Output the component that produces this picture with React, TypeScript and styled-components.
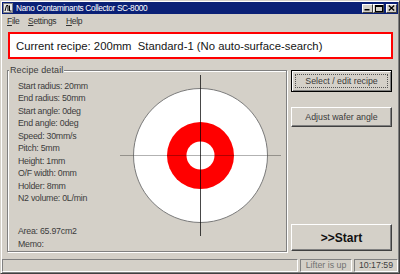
import React from "react";
import styled, { createGlobalStyle, css } from "styled-components";

const Global = createGlobalStyle`
  html, body { margin: 0; padding: 0; background: #d4d0c8; }
  body { width: 400px; height: 274px; overflow: hidden; font-family: "Liberation Sans", Arial, sans-serif; }
  * { box-sizing: border-box; }
`;

const Window = styled.div`
  width: 400px;
  height: 274px;
  background: #d4d0c8;
  border: 1px solid;
  border-color: #d4d0c8 #404040 #404040 #d4d0c8;
  box-shadow: inset 1px 1px 0 #ffffff, inset -1px -1px 0 #808080;
  padding: 1px;
  display: flex;
  flex-direction: column;
`;

const TitleBar = styled.div`
  height: 12px;
  flex: none;
  background: #0a2076;
  display: flex;
  align-items: center;
  padding: 0 1px 0 1px;
  color: #fff;
`;

const AppIcon = styled.svg`
  width: 10px;
  height: 10px;
  flex: none;
`;

const TitleText = styled.span`
  font-size: 8.3px;
  letter-spacing: -0.35px;
  line-height: 12px;
  margin-left: 3px;
  flex: 1;
  white-space: nowrap;
`;

const CaptionButtons = styled.div`
  display: flex;
  align-items: center;
`;

const CaptionButton = styled.div<{ $gap?: number }>`
  width: 11px;
  height: 9px;
  margin-left: ${(p) => p.$gap ?? 0}px;
  background: #d4d0c8;
  border-top: 1px solid #fff;
  border-left: 1px solid #fff;
  border-right: 1px solid #404040;
  border-bottom: 1px solid #404040;
  display: flex;
  align-items: center;
  justify-content: center;
`;

const MenuBar = styled.div`
  height: 14px;
  flex: none;
  display: flex;
  align-items: center;
  padding-left: 5px;
`;

const MenuItem = styled.span<{ $w: number }>`
  width: ${(p) => p.$w}px;
  font-size: 8.5px;
  letter-spacing: -0.3px;
  color: #303030;
  line-height: 14px;
`;

const Client = styled.div`
  display: flex;
  flex-direction: column;
  padding: 4px 0 0 5px;
`;

const RecipeBanner = styled.div`
  width: 385px;
  height: 27px;
  margin-left: 1px;
  border: 2px solid #ff0000;
  background: #fff;
  display: flex;
  align-items: center;
  padding-left: 6px;
  font-size: 11.3px;
  color: #151515;
  white-space: nowrap;
`;

const Body = styled.div`
  display: flex;
  margin-top: 11px;
  gap: 4px;
`;

const GroupFrame = styled.div`
  position: relative;
  width: 280px;
  height: 182px;
  border: 1px solid #808080;
  box-shadow: 1px 1px 0 #ffffff, inset 1px 1px 0 #ffffff;
  display: flex;
  padding: 0 3px 0 10px;
`;

const Legend = styled.span`
  position: absolute;
  top: -6px;
  left: 1px;
  padding: 0 1px;
  background: #d4d0c8;
  font-size: 9px;
  line-height: 11px;
  letter-spacing: 0.1px;
  color: #3c3c3c;
  white-space: nowrap;
`;

const LabelColumn = styled.div`
  width: 102px;
  display: flex;
  flex-direction: column;
  padding: 9px 0 1px 0;
`;

const LabelGroup = styled.div<{ $bottom?: boolean }>`
  display: flex;
  flex-direction: column;
  ${(p) =>
    p.$bottom &&
    css`
      margin-top: auto;
    `}
`;

const Label = styled.div`
  font-size: 8.8px;
  letter-spacing: -0.25px;
  line-height: 12.45px;
  color: #3c3c3c;
  white-space: nowrap;
`;

const Wafer = styled.svg`
  width: 161px;
  height: 161px;
  margin-top: 4px;
  flex: none;
`;

const ButtonColumn = styled.div`
  width: 101px;
  display: flex;
  flex-direction: column;
  height: 182px;
`;

const Button = styled.div<{ $h: number; $default?: boolean; $big?: boolean; $mt?: number | "auto" }>`
  height: ${(p) => p.$h}px;
  flex: none;
  margin-top: ${(p) => (p.$mt === "auto" ? "auto" : `${p.$mt ?? 0}px`)};
  margin-bottom: ${(p) => (p.$big ? 1 : 0)}px;
  background: #d4d0c8;
  display: flex;
  align-items: center;
  justify-content: center;
  position: relative;
  white-space: nowrap;
  color: ${(p) => (p.$big ? "#111" : "#3a3a3a")};
  font-size: ${(p) => (p.$big ? "12px" : "8.8px")};
  font-weight: ${(p) => (p.$big ? 700 : 400)};
  ${(p) =>
    p.$default
      ? css`
          border: 1px solid #000;
          box-shadow: inset 1px 1px 0 #fff, inset -1px -1px 0 #808080;
        `
      : css`
          border-top: 1px solid #fff;
          border-left: 1px solid #fff;
          border-right: 1px solid #404040;
          border-bottom: 1px solid #404040;
          box-shadow: inset -1px -1px 0 #808080;
        `}
`;

const FocusRect = styled.span`
  position: absolute;
  inset: 3px;
  border: 1px dotted #555;
  pointer-events: none;
`;

const StatusBar = styled.div`
  margin-top: auto;
  height: 13px;
  flex: none;
  display: flex;
  gap: 2px;
`;

const StatusPanel = styled.div<{ $w?: number; $muted?: boolean }>`
  ${(p) => (p.$w ? `width: ${p.$w}px; flex: none;` : "flex: 1;")}
  border-top: 1px solid #808080;
  border-left: 1px solid #808080;
  border-right: 1px solid #fff;
  border-bottom: 1px solid #fff;
  font-size: 8.8px;
  line-height: 11px;
  text-align: center;
  color: ${(p) => (p.$muted ? "#707070" : "#404040")};
  white-space: nowrap;
`;

const details = [
  "Start radius: 20mm",
  "End radius: 50mm",
  "Start angle: 0deg",
  "End angle: 0deg",
  "Speed: 30mm/s",
  "Pitch: 5mm",
  "Height: 1mm",
  "O/F width: 0mm",
  "Holder: 8mm",
  "N2 volume: 0L/min",
];

export default function App() {
  return (
    <>
      <Global />
      <Window>
        <TitleBar>
          <AppIcon viewBox="0 0 10 10">
            <rect x="0.5" y="0.5" width="9" height="9" fill="#e8e8e8" stroke="#808080" />
            <path d="M2 8 L3.5 2.5 L5 2.5 L5 8 M6.5 2.5 L6.5 8 L8.5 8" stroke="#000" strokeWidth="1" fill="none" />
          </AppIcon>
          <TitleText>Nano Contaminants Collector SC-8000</TitleText>
          <CaptionButtons>
            <CaptionButton>
              <svg width="7" height="6" viewBox="0 0 7 6">
                <rect x="0.5" y="4" width="5" height="1.5" fill="#000" />
              </svg>
            </CaptionButton>
            <CaptionButton>
              <svg width="8" height="7" viewBox="0 0 8 7">
                <rect x="0.5" y="0.5" width="7" height="6" fill="none" stroke="#000" />
                <rect x="0.5" y="0.5" width="7" height="1.5" fill="#000" />
              </svg>
            </CaptionButton>
            <CaptionButton $gap={2}>
              <svg width="7" height="6" viewBox="0 0 7 6">
                <path d="M0.8 0.5 L6.2 5.5 M6.2 0.5 L0.8 5.5" stroke="#000" strokeWidth="1.3" />
              </svg>
            </CaptionButton>
          </CaptionButtons>
        </TitleBar>
        <MenuBar>
          <MenuItem $w={21}>
            <u>F</u>ile
          </MenuItem>
          <MenuItem $w={38}>
            <u>S</u>ettings
          </MenuItem>
          <MenuItem $w={20}>
            <u>H</u>elp
          </MenuItem>
        </MenuBar>
        <Client>
          <RecipeBanner>Current recipe: 200mm&nbsp;&nbsp;Standard-1 (No auto-surface-search)</RecipeBanner>
          <Body>
            <GroupFrame>
              <Legend>Recipe detail</Legend>
              <LabelColumn>
                <LabelGroup>
                  {details.map((d) => (
                    <Label key={d}>{d}</Label>
                  ))}
                </LabelGroup>
                <LabelGroup $bottom>
                  <Label>Area: 65.97cm2</Label>
                  <Label>Memo:</Label>
                </LabelGroup>
              </LabelColumn>
              <Wafer viewBox="0 0 161 161">
                <circle cx="80.5" cy="80.5" r="67" fill="#fff" stroke="#7a7a7a" strokeWidth="1" />
                <circle cx="80.5" cy="80.5" r="33.5" fill="#ff0000" />
                <circle cx="80.5" cy="80.5" r="14" fill="#fff" />
                <line x1="0" y1="80.5" x2="161" y2="80.5" stroke="rgba(0,0,0,0.3)" strokeWidth="1" />
                <line x1="80.5" y1="0" x2="80.5" y2="161" stroke="rgba(0,0,0,0.72)" strokeWidth="1" />
              </Wafer>
            </GroupFrame>
            <ButtonColumn>
              <Button $h={22} $default>
                <FocusRect />
                Select / edit recipe
              </Button>
              <Button $h={20} $mt={15}>
                Adjust wafer angle
              </Button>
              <Button $h={27} $mt="auto" $big>
                &gt;&gt;Start
              </Button>
            </ButtonColumn>
          </Body>
        </Client>
        <StatusBar>
          <StatusPanel />
          <StatusPanel $w={52} $muted>
            Lifter is up
          </StatusPanel>
          <StatusPanel $w={44}>10:17:59</StatusPanel>
        </StatusBar>
      </Window>
    </>
  );
}
